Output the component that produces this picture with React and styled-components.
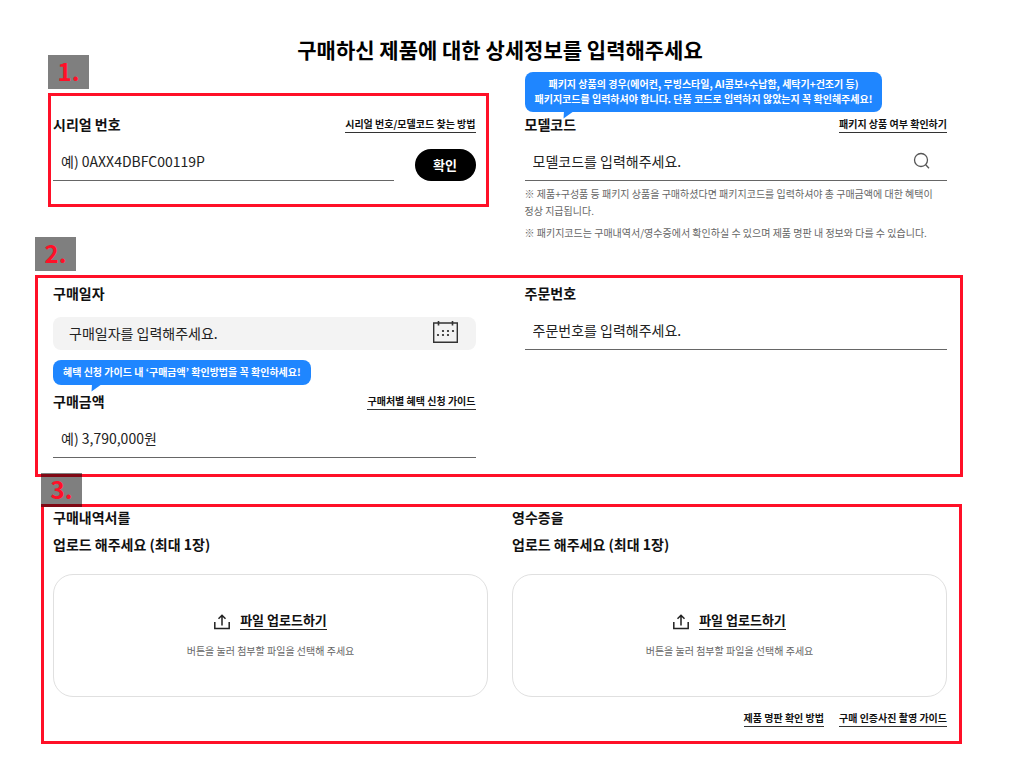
import React from "react";
import styled, { createGlobalStyle } from "styled-components";

const RED = "#ff1028";
const BLUE = "#1f86ff";

const GlobalStyle = createGlobalStyle`
  *, *::before, *::after { box-sizing: border-box; }
  body {
    margin: 0;
    background: #fff;
    color: #111;
    font-family: "Noto Sans CJK KR", "Noto Sans", sans-serif;
    font-size: 14px;
  }
  input, button { font-family: inherit; color: inherit; }
`;

const Page = styled.main`
  padding: 34px 77px 20px 53px;
`;

const Title = styled.h1`
  margin: 0 0 49px;
  font-size: 21px;
  line-height: 30px;
  font-weight: 700;
  text-align: center;
  color: #000;
`;

const Form = styled.form`
  display: flex;
  flex-direction: column;
`;

const Section = styled.section`
  position: relative;
  margin-top: ${(p) => p.$space || 0}px;
`;

const Columns = styled.div`
  display: grid;
  grid-template-columns: minmax(0, 1fr) minmax(0, 1fr);
  column-gap: ${(p) => p.$gap}px;
  row-gap: 40px;
  align-items: start;
`;

const Field = styled.div`
  position: relative;
`;

const FieldHead = styled.div`
  position: relative;
  display: flex;
  align-items: center;
  justify-content: space-between;
  height: 22px;
`;

const Label = styled.label`
  font-size: 14px;
  line-height: 22px;
  font-weight: 700;
`;

const GuideLink = styled.a`
  border-bottom: 1px solid #333;
  color: #111;
  font-size: 10px;
  line-height: 16px;
  font-weight: 700;
  text-decoration: none;
  white-space: nowrap;
`;

const InputRow = styled.div`
  display: flex;
  align-items: flex-end;
  gap: 21px;
  margin-top: 9px;
`;

const Control = styled.div`
  display: flex;
  align-items: center;
  flex: 1;
  min-width: 0;
  height: 37px;
  padding: 0 16px 2px 8px;
  border-bottom: 1px solid #666;
`;

const DateControl = styled(Control)`
  height: 33px;
  margin-top: 4px;
  padding: 0 18px 2px 16px;
  border: 0;
  border-radius: 8px;
  background: #f3f3f3;
`;

const TextInput = styled.input`
  flex: 1;
  min-width: 0;
  padding: 0;
  border: 0;
  outline: 0;
  background: transparent;
  font-size: 14px;
  line-height: 24px;
  &::placeholder { color: #222; opacity: 1; }
`;

const IconButton = styled.button`
  display: flex;
  padding: 0;
  border: 0;
  background: none;
  cursor: pointer;
`;

const ConfirmButton = styled.button`
  width: 61px;
  height: 32px;
  padding: 0 0 2px;
  border: 0;
  border-radius: 16px;
  background: #000;
  color: #fff;
  font-size: 13px;
  font-weight: 700;
  cursor: pointer;
`;

const Notes = styled.div`
  display: flex;
  flex-direction: column;
  gap: 5px;
  margin-top: 4px;
`;

const Note = styled.p`
  margin: 0;
  color: #666;
  font-size: 10px;
  line-height: 17px;
  word-break: keep-all;
`;

const Bubble = styled.div`
  position: absolute;
  left: 0;
  bottom: calc(100% + ${(p) => p.$lift}px);
  padding: 4px 10px 6px;
  border-radius: 8px;
  background: ${BLUE};
  color: #fff;
  font-size: 10px;
  line-height: 15px;
  font-weight: 700;
  text-align: center;
  white-space: nowrap;
`;

const BubbleTail = styled.svg`
  position: absolute;
  top: 100%;
  left: 38px;
  margin-top: -1px;
`;

const UploadTitle = styled.h2`
  margin: 0 0 16px;
  font-size: 14px;
  line-height: 27px;
  font-weight: 700;
`;

const UploadBox = styled.div`
  display: flex;
  flex-direction: column;
  align-items: center;
  gap: 12px;
  padding: 36px 16px;
  border: 1px solid #e0e0e0;
  border-radius: 20px;
`;

const UploadButton = styled.button`
  display: flex;
  align-items: flex-end;
  gap: 10px;
  padding: 0;
  border: 0;
  background: none;
  font-size: 13px;
  line-height: 18px;
  font-weight: 700;
  cursor: pointer;
`;

const UploadText = styled.span`
  border-bottom: 1px solid #222;
`;

const UploadHint = styled.p`
  margin: 0;
  color: #666;
  font-size: 10px;
  line-height: 18px;
`;

const GuideLinks = styled.nav`
  display: flex;
  justify-content: flex-end;
  gap: 15px;
  margin-top: 13px;
`;

const Frame = styled.div`
  position: absolute;
  inset: ${(p) => p.$inset};
  border: 3px solid ${RED};
  pointer-events: none;
`;

const Step = styled.span`
  position: absolute;
  left: -3px;
  bottom: calc(100% + ${(p) => p.$lift}px);
  width: 41px;
  height: 34px;
  background: rgba(0, 0, 0, 0.5);
  color: ${RED};
  font-size: 24px;
  line-height: 32px;
  font-weight: 700;
  text-align: center;
`;

function StepFrame({ inset, lift, children }) {
  return (
    <Frame $inset={inset}>
      <Step $lift={lift}>{children}</Step>
    </Frame>
  );
}

function Tip({ lift, children }) {
  return (
    <Bubble $lift={lift} role="note">
      {children}
      <BubbleTail width="12" height="8" viewBox="0 0 12 8" aria-hidden="true">
        <path d="M1 0H11L0.500 7.500Z" fill={BLUE} />
      </BubbleTail>
    </Bubble>
  );
}

function SearchIcon() {
  return (
    <svg width="18" height="18" viewBox="0 0 18 18" fill="none" stroke="#555" strokeWidth="1.3" aria-hidden="true">
      <circle cx="8" cy="8" r="6.500" />
      <path d="M12.700 12.800L16 16.300" />
    </svg>
  );
}

function CalendarIcon() {
  const dots = [[9, 9], [14, 9], [19, 9], [4, 13], [9, 13], [14, 13]];
  return (
    <svg width="25" height="26" viewBox="0 0 25 26" fill="none" stroke="#333" aria-hidden="true">
      <path d="M0.700 3H24.300V22.300H0.700Z" strokeWidth="1.4" />
      <path d="M5.500 1V5.500M19.500 1V5.500" strokeWidth="1.6" />
      <g fill="#222" stroke="none">
        {dots.map(([x, y]) => (
          <circle key={`${x}-${y}`} cx={x + 1} cy={y + 2} r="1.1" />
        ))}
      </g>
    </svg>
  );
}

function UploadIcon() {
  return (
    <svg width="16" height="17" viewBox="0 0 16 17" fill="none" stroke="#222" strokeWidth="1.5" aria-hidden="true">
      <path d="M0.800 9V15.500H15.200V9" />
      <path d="M8 12.500V2.500M4.500 5.700L8 2.200L11.500 5.700" />
    </svg>
  );
}

function Upload({ name }) {
  return (
    <div>
      <UploadTitle>
        {name}
        <br />
        업로드 해주세요 (최대 1장)
      </UploadTitle>
      <UploadBox>
        <UploadButton type="button">
          <UploadIcon />
          <UploadText>파일 업로드하기</UploadText>
        </UploadButton>
        <UploadHint>버튼을 눌러 첨부할 파일을 선택해 주세요</UploadHint>
      </UploadBox>
    </div>
  );
}

export default function App() {
  return (
    <>
      <GlobalStyle />
      <Page>
        <Title>구매하신 제품에 대한 상세정보를 입력해주세요</Title>
        <Form>
          <Section>
            <Columns $gap={49}>
              <Field>
                <FieldHead>
                  <Label htmlFor="serial">시리얼 번호</Label>
                  <GuideLink href="#serial-guide">시리얼 번호/모델코드 찾는 방법</GuideLink>
                </FieldHead>
                <InputRow>
                  <Control>
                    <TextInput id="serial" placeholder="예) 0AXX4DBFC00119P" />
                  </Control>
                  <ConfirmButton type="button">확인</ConfirmButton>
                </InputRow>
                <StepFrame inset="-20px -13px -26px -5px" lift={7}>1.</StepFrame>
              </Field>
              <Field>
                <FieldHead>
                  <Label htmlFor="model">모델코드</Label>
                  <GuideLink href="#package">패키지 상품 여부 확인하기</GuideLink>
                  <Tip lift={1}>
                    패키지 상품의 경우(에어컨, 무빙스타일, AI콤보+수납함, 세탁기+건조기 등)
                    <br />
                    패키지코드를 입력하셔야 합니다. 단품 코드로 입력하지 않았는지 꼭 확인해주세요!
                  </Tip>
                </FieldHead>
                <InputRow>
                  <Control>
                    <TextInput id="model" placeholder="모델코드를 입력해주세요." />
                    <IconButton type="button" aria-label="검색">
                      <SearchIcon />
                    </IconButton>
                  </Control>
                </InputRow>
                <Notes>
                  <Note>
                    ※ 제품+구성품 등 패키지 상품을 구매하셨다면 패키지코드를 입력하셔야 총 구매금액에 대한 혜택이 정상 지급됩니다.
                  </Note>
                  <Note>
                    ※ 패키지코드는 구매내역서/영수증에서 확인하실 수 있으며 제품 명판 내 정보와 다를 수 있습니다.
                  </Note>
                </Notes>
              </Field>
            </Columns>
          </Section>

          <Section $space={41}>
            <Columns $gap={49}>
              <Field>
                <FieldHead>
                  <Label htmlFor="date">구매일자</Label>
                </FieldHead>
                <InputRow>
                  <DateControl>
                    <TextInput id="date" placeholder="구매일자를 입력해주세요." />
                    <IconButton type="button" aria-label="날짜 선택">
                      <CalendarIcon />
                    </IconButton>
                  </DateControl>
                </InputRow>
              </Field>
              <Field>
                <FieldHead>
                  <Label htmlFor="order">주문번호</Label>
                </FieldHead>
                <InputRow>
                  <Control>
                    <TextInput id="order" placeholder="주문번호를 입력해주세요." />
                  </Control>
                </InputRow>
              </Field>
              <Field>
                <FieldHead>
                  <Label htmlFor="price">구매금액</Label>
                  <GuideLink href="#benefit-guide">구매처별 혜택 신청 가이드</GuideLink>
                  <Tip lift={5}>혜택 신청 가이드 내 ‘구매금액’ 확인방법을 꼭 확인하세요!</Tip>
                </FieldHead>
                <InputRow>
                  <Control>
                    <TextInput id="price" placeholder="예) 3,790,000원" />
                  </Control>
                </InputRow>
              </Field>
            </Columns>
            <StepFrame inset="-7px -16px -19px -18px" lift={7}>2.</StepFrame>
          </Section>

          <Section $space={46}>
            <Columns $gap={24}>
              <Upload name="구매내역서를" />
              <Upload name="영수증을" />
            </Columns>
            <GuideLinks>
              <GuideLink href="#plate-guide">제품 명판 확인 방법</GuideLink>
              <GuideLink href="#photo-guide">구매 인증사진 촬영 가이드</GuideLink>
            </GuideLinks>
            <StepFrame inset="0 -15px -17px -12px" lift={0}>3.</StepFrame>
          </Section>
        </Form>
      </Page>
    </>
  );
}
